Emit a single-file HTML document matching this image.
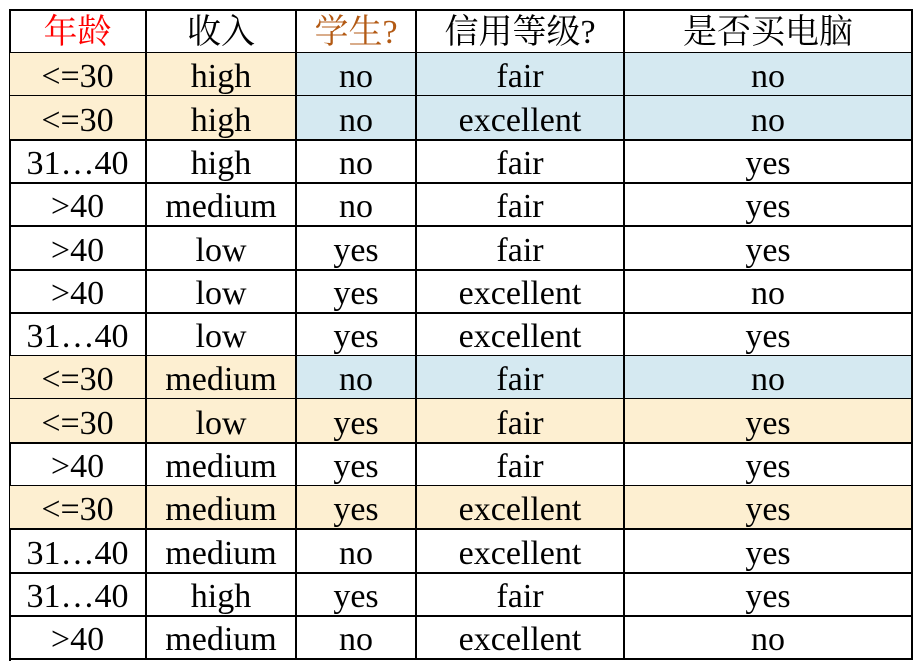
<!DOCTYPE html>
<html><head><meta charset="utf-8"><style>
body{margin:0;width:921px;height:669px;background:#fff;position:relative;overflow:hidden;font-family:"Liberation Serif","Noto Serif CJK SC",serif;}
.c{position:absolute;box-sizing:border-box;display:flex;align-items:center;justify-content:center;font-size:34px;color:#000;border-right:2px solid #000;border-bottom:2px solid #000;line-height:1;padding-top:6px;white-space:nowrap}
.h{font-family:"Liberation Serif","Noto Serif CJK SC",serif;font-size:34px;padding-top:3px}
.b{background:#fdefd1}.l{background:#d5e9f1}
</style></head><body>
<div id="t" style="position:absolute;left:9px;top:9px;width:904px;height:652px;border-left:2px solid #000;border-top:2px solid #000;box-sizing:border-box"></div>
<script>
var xs=[10,147,297,417,625,913];
var rows=[
["<span style='color:#f00'>年龄</span>","收入","<span style='color:#b35a14'>学生?</span>","信用等级?","是否买电脑"],
["<=30","high","no","fair","no","bbllll"],
["<=30","high","no","excellent","no","bbllll"],
["31…40","high","no","fair","yes",""],
[">40","medium","no","fair","yes",""],
[">40","low","yes","fair","yes",""],
[">40","low","yes","excellent","no",""],
["31…40","low","yes","excellent","yes",""],
["<=30","medium","no","fair","no","bblll"],
["<=30","low","yes","fair","yes","bbbbb"],
[">40","medium","yes","fair","yes",""],
["<=30","medium","yes","excellent","yes","bbbbb"],
["31…40","medium","no","excellent","yes",""],
["31…40","high","yes","fair","yes",""],
[">40","medium","no","excellent","no",""]];
var h='';
for(var r=0;r<rows.length;r++){
 var y0=r==0?10:Math.round(53+(r-1)*43.3), y1=r==0?53:Math.round(53+r*43.3);
 for(var c=0;c<5;c++){
  var txt=rows[r][c]; if(r>0) txt=txt.replace(/</g,'&lt;').replace(/>/g,'&gt;');
  var cls='c'+(r==0?' h':'');
  var f=rows[r][5]; if(f&&f[c]) cls+=' '+f[c];
  h+='<div class="'+cls+'" style="left:'+xs[c]+'px;top:'+y0+'px;width:'+(xs[c+1]-xs[c])+'px;height:'+(y1-y0+1)+'px">'+txt+'</div>';
 }
}
document.body.insertAdjacentHTML('beforeend',h);
</script>
</body></html>
